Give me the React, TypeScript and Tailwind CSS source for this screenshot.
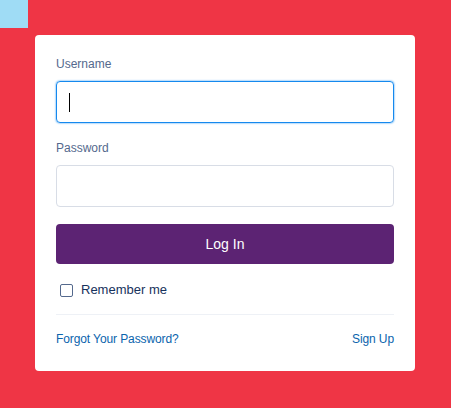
import React from "react";

export default function App() {
  return (
    <div
      className="min-h-screen w-full bg-[#ef3545] overflow-hidden"
      style={{ fontFamily: '"Liberation Sans", Arial, sans-serif' }}
    >
      <div className="w-[28px] h-[28px] bg-[#9fdcf5]" />
      <div className="ml-[35px] mt-[7px] w-[380px] h-[336px] bg-white rounded-[4px] px-[21px] pt-[20px]">
        <div className="h-[18px] leading-[18px] text-[12px] text-[#54698d]">Username</div>
        <div className="mt-[8px] h-[42px] rounded-[4px] border border-[#1589ee] shadow-[0_0_2px_#1589ee] flex items-center pl-[12px]">
          <div className="w-[1px] h-[19px] bg-black" />
        </div>
        <div className="mt-[16px] h-[18px] leading-[18px] text-[12px] text-[#54698d]">Password</div>
        <div className="mt-[8px] h-[42px] rounded-[4px] border border-[#d8dde6]" />
        <button className="mt-[17px] w-full h-[40px] rounded-[4px] bg-[#5c2373] text-white text-[14px] flex items-center justify-center">
          Log In
        </button>
        <div className="mt-[12px] h-[28px] flex items-center pl-[4px]">
          <div className="w-[13px] h-[13px] rounded-[2px] border border-[#54698d] bg-white" />
          <span className="ml-[8px] text-[13px] text-[#16325c]">Remember me</span>
        </div>
        <div className="mt-[10px] border-t border-[#eef1f6]" />
        <div className="pt-[15px] flex justify-between text-[12px] leading-[18px] text-[#0a64ad] tracking-[-0.1px]">
          <span>Forgot Your Password?</span>
          <span>Sign Up</span>
        </div>
      </div>
    </div>
  );
}
